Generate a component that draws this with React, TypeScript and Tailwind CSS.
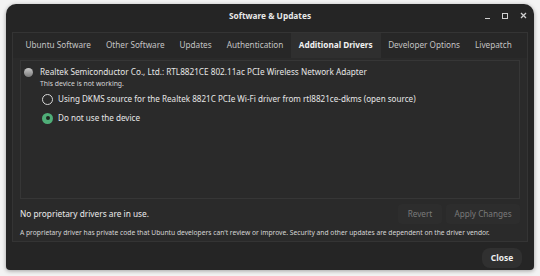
const TABS = [
  "Ubuntu Software",
  "Other Software",
  "Updates",
  "Authentication",
  "Additional Drivers",
  "Developer Options",
  "Livepatch",
];

const ACTIVE_TAB = "Additional Drivers";

function Radio({ checked }: { checked?: boolean }) {
  if (checked) {
    return (
      <span className="flex h-[11px] w-[11px] items-center justify-center rounded-full bg-[#4fae78]">
        <span className="h-[4px] w-[4px] rounded-full bg-[#1e2a22]" />
      </span>
    );
  }
  return <span className="h-[11px] w-[11px] rounded-full border-[1.5px] border-[#d8d8d8]" />;
}

export default function App() {
  return (
    <div
      className="h-[276px] w-[540px] overflow-hidden bg-[#f3f3f3] pl-[6px] pt-[4px]"
      style={{ fontFamily: '"Noto Sans", "Open Sans", sans-serif' }}
    >
      <div className="flex h-[266px] w-[528px] flex-col rounded-t-[10px] rounded-b-[4px] bg-[#252525] shadow-[0_1px_4px_rgba(0,0,0,0.35)]">
        {/* Barra de título */}
        <div className="relative flex h-[28px] shrink-0 items-center justify-center pb-[4px]">
          <span className="text-[8.3px] font-bold text-[#e8e8e8]">Software &amp; Updates</span>
          <div className="absolute right-[7px] top-[8px] flex items-center gap-[12px]">
            <span className="block h-[1.5px] w-[5px] translate-y-[3px] bg-[#d0d0d0]" />
            <span className="block h-[6px] w-[6px] border border-[#d0d0d0]" />
            <svg width="7" height="7" viewBox="0 0 7 7" className="stroke-[#d0d0d0]">
              <path d="M1 1L6 6M6 1L1 6" strokeWidth="1.3" />
            </svg>
          </div>
        </div>

        {/* Cuaderno de pestañas */}
        <div className="mx-[6px] flex h-[210px] flex-col border border-[#343434] bg-[#2a2a2a]">
          <div className="flex h-[25px] shrink-0 items-stretch whitespace-nowrap bg-[#272727] pl-[5px]">
            {TABS.map((tab) => (
              <div
                key={tab}
                className={
                  tab === ACTIVE_TAB
                    ? "flex items-center bg-[#2f2f2f] px-[8px] text-[8.2px] font-bold text-[#f2f2f2]"
                    : "flex items-center px-[7.5px] text-[8.2px] text-[#c4c4c4]"
                }
              >
                {tab}
              </div>
            ))}
          </div>

          <div className="flex flex-1 flex-col px-[7px] pt-[2px]">
            {/* Lista de dispositivos */}
            <div className="h-[139px] whitespace-nowrap border border-[#363636] bg-[#2a2a2a] pl-[3px] pt-[5px] text-[#e6e6e6]">
              <div className="flex h-[12px] items-center gap-[7px]">
                <span className="h-[9px] w-[9px] rounded-full bg-gradient-to-b from-[#c8c8c8] to-[#7a7a7a]" />
                <span className="text-[8.2px]">
                  Realtek Semiconductor Co., Ltd.: RTL8821CE 802.11ac PCIe Wireless Network Adapter
                </span>
              </div>
              <div className="flex h-[12px] items-center pl-[16px] text-[6.8px] text-[#d8d8d8]">
                This device is not working.
              </div>
              <div className="mt-[2px] flex h-[14px] items-center gap-[5px] pl-[18px]">
                <Radio />
                <span className="text-[8.1px]">
                  Using DKMS source for the Realtek 8821C PCIe Wi-Fi driver from rtl8821ce-dkms (open source)
                </span>
              </div>
              <div className="mt-[5px] flex h-[14px] items-center gap-[5px] pl-[18px]">
                <Radio checked />
                <span className="text-[8.1px]">Do not use the device</span>
              </div>
            </div>

            <div className="mt-[5px] flex h-[20px] items-center">
              <span className="flex-1 text-[8.3px] text-[#ececec]">No proprietary drivers are in use.</span>
              <span className="flex h-[20px] w-[44px] items-center justify-center rounded-[4px] bg-[#2d2d2d] text-[8.2px] text-[#7a7a7a]">
                Revert
              </span>
              <span className="ml-[4px] flex h-[20px] w-[74px] items-center justify-center rounded-[4px] bg-[#2d2d2d] text-[8.2px] text-[#7a7a7a]">
                Apply Changes
              </span>
            </div>

            <div className="mt-[4px] whitespace-nowrap text-[6.7px] text-[#d6d6d6]">
              A proprietary driver has private code that Ubuntu developers can't review or improve. Security and other updates are dependent on the driver vendor.
            </div>
          </div>
        </div>

        <div className="flex flex-1 items-center justify-end pr-[12px] pt-[4px]">
          <span className="flex h-[20px] w-[40px] items-center justify-center rounded-[8px] bg-[#303030] text-[8.4px] font-bold text-[#eeeeee]">
            Close
          </span>
        </div>
      </div>
    </div>
  );
}
